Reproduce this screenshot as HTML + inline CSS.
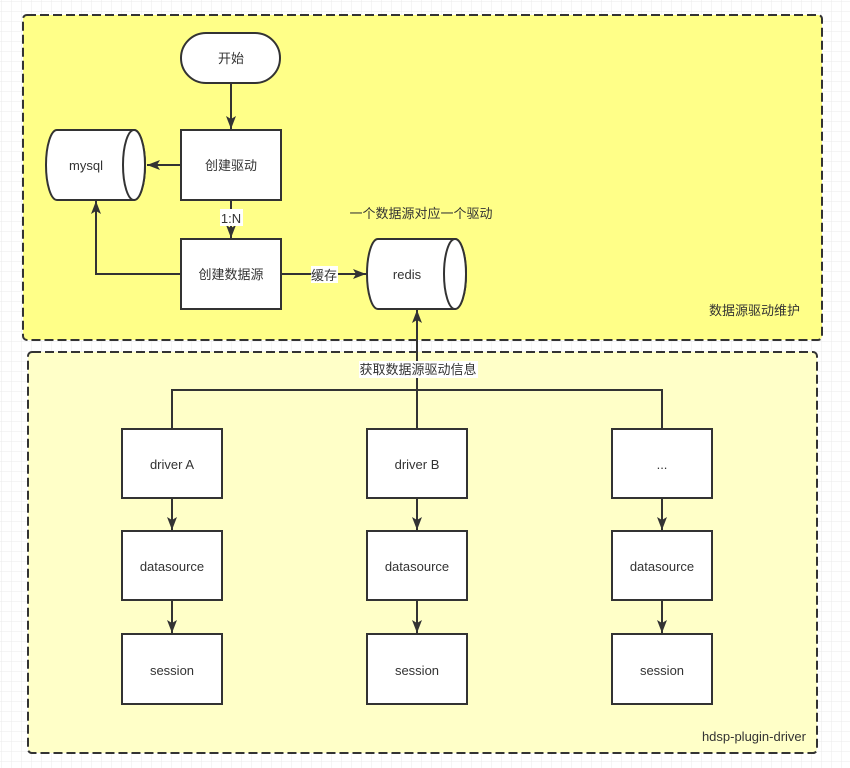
<!DOCTYPE html>
<html><head><meta charset="utf-8"><style>
html,body{margin:0;padding:0;background:#fff}
svg{display:block}
text{font-family:"Liberation Sans","Noto Sans CJK SC",sans-serif;font-size:13px;fill:#333}
</style></head><body>
<svg width="850" height="768" viewBox="0 0 850 768" xmlns="http://www.w3.org/2000/svg">
<defs>
<pattern id="g" width="10" height="10" patternUnits="userSpaceOnUse" x="1" y="1">
<path d="M10 0H0V10" fill="none" stroke="#ebebeb" stroke-width="1"/>
</pattern>
<marker id="a" markerWidth="14" markerHeight="12" refX="13" refY="6" orient="auto" markerUnits="userSpaceOnUse">
<path d="M0 1L13 6L0 11L3 6Z" fill="#333"/>
</marker>
</defs>
<rect width="850" height="768" fill="url(#g)"/>
<g stroke="#333" stroke-width="2" stroke-dasharray="9 4">
<rect x="23" y="15" width="799" height="325" rx="4" fill="#ffff88"/>
<rect x="28" y="352" width="789" height="401" rx="4" fill="#ffffc8"/>
</g>
<g stroke="#333" stroke-width="2" fill="none">
<line x1="231" y1="83" x2="231" y2="129" marker-end="url(#a)"/>
<line x1="181" y1="165" x2="147" y2="165" marker-end="url(#a)"/>
<line x1="231" y1="200" x2="231" y2="238" marker-end="url(#a)"/>
<polyline points="181,274 96,274 96,201" marker-end="url(#a)"/>
<line x1="281" y1="274" x2="366" y2="274" marker-end="url(#a)"/>
<line x1="417" y1="429" x2="417" y2="310" marker-end="url(#a)"/>
<polyline points="172,429 172,390 662,390 662,429"/>
<line x1="172" y1="498" x2="172" y2="530" marker-end="url(#a)"/>
<line x1="172" y1="600" x2="172" y2="633" marker-end="url(#a)"/>
<line x1="417" y1="498" x2="417" y2="530" marker-end="url(#a)"/>
<line x1="417" y1="600" x2="417" y2="633" marker-end="url(#a)"/>
<line x1="662" y1="498" x2="662" y2="530" marker-end="url(#a)"/>
<line x1="662" y1="600" x2="662" y2="633" marker-end="url(#a)"/>
</g>
<g stroke="#333" stroke-width="2" fill="#fff">
<rect x="181" y="33" width="99" height="50" rx="25"/>
<rect x="181" y="130" width="100" height="70"/>
<rect x="181" y="239" width="100" height="70"/>
<path d="M57 130H134A11 35 0 0 1 134 200H57A11 35 0 0 1 57 130Z"/>
<ellipse cx="134" cy="165" rx="11" ry="35"/>
<path d="M378 239H455A11 35 0 0 1 455 309H378A11 35 0 0 1 378 239Z"/>
<ellipse cx="455" cy="274" rx="11" ry="35"/>
<rect x="122" y="429" width="100" height="69"/>
<rect x="122" y="531" width="100" height="69"/>
<rect x="122" y="634" width="100" height="70"/>
<rect x="367" y="429" width="100" height="69"/>
<rect x="367" y="531" width="100" height="69"/>
<rect x="367" y="634" width="100" height="70"/>
<rect x="612" y="429" width="100" height="69"/>
<rect x="612" y="531" width="100" height="69"/>
<rect x="612" y="634" width="100" height="70"/>
</g>
<rect x="220" y="209" width="23" height="17" fill="#fff"/>
<rect x="311" y="266" width="27" height="17" fill="#fff"/>
<rect x="359" y="361" width="119" height="17" fill="#fff"/>
<g text-anchor="middle">
<text x="231" y="63">开始</text>
<text x="231" y="170">创建驱动</text>
<text x="231" y="279">创建数据源</text>
<text x="86" y="170">mysql</text>
<text x="407" y="279">redis</text>
<text x="231" y="223">1:N</text>
<text x="324" y="280">缓存</text>
<text x="418" y="374">获取数据源驱动信息</text>
<text x="421" y="218">一个数据源对应一个驱动</text>
<text x="172" y="469">driver A</text>
<text x="417" y="469">driver B</text>
<text x="662" y="469">...</text>
<text x="172" y="571">datasource</text>
<text x="417" y="571">datasource</text>
<text x="662" y="571">datasource</text>
<text x="172" y="675">session</text>
<text x="417" y="675">session</text>
<text x="662" y="675">session</text>
</g>
<g text-anchor="end">
<text x="800" y="315">数据源驱动维护</text>
<text x="806" y="741">hdsp-plugin-driver</text>
</g>
</svg>
</body></html>
